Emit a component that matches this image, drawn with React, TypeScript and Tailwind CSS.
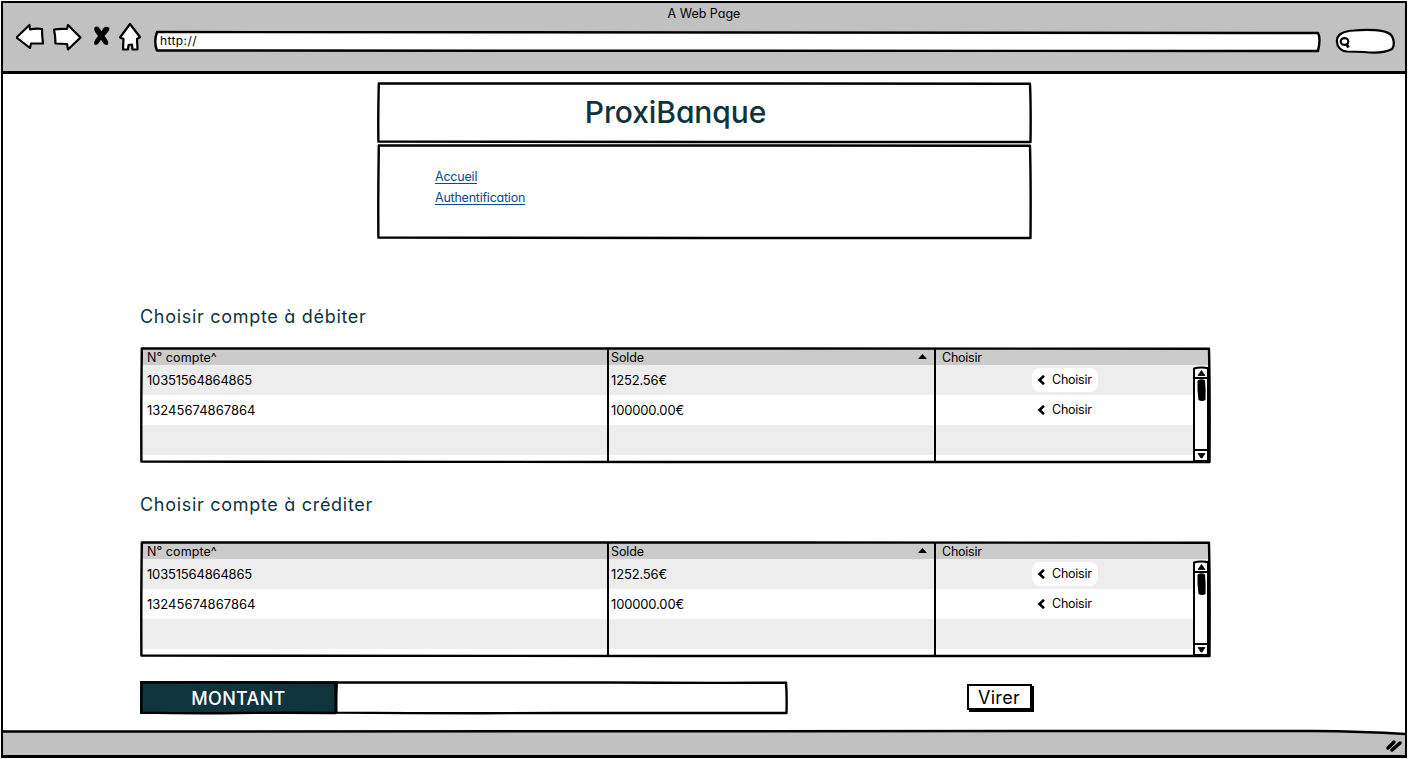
import type { ReactNode } from 'react';

const accounts = [
  { id: '10351564864865', idClass: 'tracking-[-0.18px]', balance: '1252.56€' },
  { id: '13245674867864', idClass: 'tracking-[0.02px]', balance: '100000.00€' },
];

function Sketch({ w, h }: { w: number; h: number }) {
  const r = w - 1.5;
  const b = h - 1;
  const d = `M1.8 1.5Q${w * 0.4} 0.9 ${w * 0.6} 1.5T${r - 0.5} 1.7Q${r + 0.5} ${h * 0.4} ${r} ${b}Q${w * 0.75} ${b - 0.5} ${w * 0.5} ${b}T1.4 ${b - 0.4}Q1 ${h * 0.6} 1.8 1.5Z`;
  return (
    <svg width={w} height={h + 1} viewBox={`0 0 ${w} ${h + 1}`} className="pointer-events-none absolute top-0 left-0" fill="none" stroke="black" strokeWidth="2.400" strokeLinejoin="round">
      <path d={d} />
    </svg>
  );
}

function Toolbar() {
  return (
    <header className="h-[71px] shrink-0 border-b-3 border-black bg-[#c1c1c1]">
      <div className="flex h-[23px] items-start justify-center pt-[3px] text-[12.5px] leading-4">A Web Page</div>
      <div className="-mt-[4px] flex h-[30px] pl-[13px]">
        <svg width="130" height="30" viewBox="16 22 130 30" fill="white" stroke="black" strokeWidth="2.200" strokeLinejoin="round" className="shrink-0">
          <path d="M16.500 37.500L29.500 25L30 29.500Q36 28 42 29Q42 36 43 43.500L31 43.500L30 48Z" />
          <path d="M54 29.500Q60 28.500 67 29L68 25L80.500 37.500L68 49.500L67 44L55.500 43.500Q55.500 36 54 29.500Z" />
          <path d="M94.500 27.500Q98 24 101.500 31.500Q104 25 109 27.500Q111 29 104.500 36Q109 41 108 44.500Q104 46.500 101 39.500Q98 45.500 95 45Q92 43 98 36Q93 30 94.500 27.500Z" fill="black" stroke="none" />
          <path d="M130 24L140 37L137 39L137.500 49.500L132.500 49.500L132 44.500L128.500 45L128 49.500L123 49.500L123.500 39L120 37.500Z" />
        </svg>
        <div className="relative mt-[8px] ml-[8px] flex h-[22px] w-[1167px] items-center pl-[6px] text-[12px] tracking-[0.4px]">
          <svg width="1167" height="23" viewBox="0 0 1167 23" className="absolute top-0 left-0" fill="white" stroke="black" strokeWidth="2.400" strokeLinejoin="round">
            <path d="M3 2Q500 1.200 1164 3Q1167 8 1164 21Q600 21.500 400 20.700L3 20.500Q-0.500 12 3 2Z" />
          </svg>
          <span className="relative">http://</span>
        </div>
        <svg width="62" height="26" viewBox="1334 28 62 26" className="mt-[6px] ml-[13px]" fill="white" stroke="black" strokeWidth="2.200">
          <path d="M1337 42C1336 34 1344 31 1354 30.500C1368 29 1384 30 1390 34C1394 37 1395 46 1392 49C1386 52.500 1374 53 1364 52L1347 51.500C1341 51 1337 47 1337 42Z" />
          <ellipse cx="1344.500" cy="41.500" rx="3.800" ry="3.300" />
          <path d="M1346.500 44L1348.500 47.500" strokeWidth="2.800" />
        </svg>
      </div>
    </header>
  );
}

function Choose({ raised }: { raised: boolean }) {
  return (
    <button className={`flex h-6 w-[66px] items-center rounded-lg pl-[4px] text-[12.5px] ${raised ? 'bg-white' : ''}`}>
      <svg width="9" height="10" viewBox="0 0 9 10" fill="none" stroke="black" strokeWidth="2.600" className="mr-[7px]"><path d="M8 0.800L3.500 5L8 9.200" /></svg>
      <span className="pt-[2px] tracking-[-0.25px]">Choisir</span>
    </button>
  );
}

function Scrollbar() {
  return (
    <svg width="17" height="95" viewBox="0 0 17 95" className="absolute top-[19px] right-px" fill="white" stroke="black" strokeWidth="2">
      <path d="M1 2.500Q8 0.500 16 2.500V95H1Z" />
      <path d="M1 12H16M1 84H16" />
      <path d="M5 9.500L8.500 4.500L12 9.500Z" fill="black" strokeWidth="0.800" />
      <path d="M4.500 14.500Q9 12 12 14.500Q13 24 12.500 34Q9 36 5.500 34Q4 24 4.500 14.500Z" fill="black" stroke="none" />
      <path d="M5 87.500H12L9 92H8Z" fill="black" strokeWidth="0.800" />
      <path d="M15.500 1V95" strokeWidth="3" />
    </svg>
  );
}

function Table() {
  const cols = 'grid grid-cols-[467px_327px_1fr]';
  return (
    <div className="relative h-[116px] w-[1071px] bg-white px-[2px] pt-[2px]">
      <div className={`${cols} h-4 bg-[#cbcbcb] text-[12.5px] leading-[18px]`}>
        <div className="pl-[5px] tracking-[0.08px]">N° compte^</div>
        <div className="flex h-4 items-center justify-between pr-[9px] pl-[2px]">
          <span className="pt-[2px] tracking-[-0.1px]">Solde</span>
          <svg width="9" height="5" viewBox="0 0 9 5" className="-mt-px"><path d="M0 5L4.500 0L9 5Z" /></svg>
        </div>
        <div className="pl-[6px] tracking-[-0.25px]">Choisir</div>
      </div>
      {accounts.map((a, i) => (
        <div key={a.id} className={`${cols} h-[30px] items-center text-[13px] ${i % 2 ? 'bg-white' : 'bg-[#ededed]'}`}>
          <div className={`pt-[2px] pl-[5px] ${a.idClass}`}>{a.id}</div>
          <div className="pt-[2px] pl-[2px] tracking-[-0.15px]">{a.balance}</div>
          <div className="-mt-px pl-[96px]"><Choose raised={i === 0} /></div>
        </div>
      ))}
      <div className="h-[30px] bg-[#ededed]" />
      <div className="absolute inset-y-px left-[467px] box-content w-[325px] border-x-2 border-black" />
      <Scrollbar />
      <Sketch w={1071} h={116} />
    </div>
  );
}

function Heading({ children }: { children: ReactNode }) {
  return <h2 className="h-7 pt-px text-[18px] leading-7 tracking-[0.7px] text-[#0e343c]">{children}</h2>;
}

export default function App() {
  return (
    <div className="h-[759px] w-[1408px] overflow-hidden bg-white p-px font-[Inter,sans-serif] text-black [font-feature-settings:'cv11']">
      <div className="flex h-[757px] flex-col border-2 border-b-3 border-black">
        <Toolbar />
        <main className="flex flex-1 flex-col pl-[137px]">
          <div className="relative mt-[8px] ml-[237px] flex h-[61px] w-[655px] items-center justify-center pr-[58px] text-[30px] font-[450] tracking-[-0.1px] text-[#0e343c]">
            ProxiBanque
            <Sketch w={655} h={61} />
          </div>
          <nav className="relative mt-[1px] ml-[237px] flex h-[95px] w-[655px] flex-col items-start pt-[25px] pl-[58px] text-[12.5px] text-[#0b4a8f]">
            <a className="mb-[6px] h-[15px] border-b border-current leading-[16px] tracking-[-0.2px]">Accueil</a>
            <a className="h-[15px] border-b border-current leading-[16px] tracking-[-0.23px]">Authentification</a>
            <Sketch w={655} h={95} />
          </nav>
          <div className="mt-[63px]"><Heading>Choisir compte à débiter</Heading></div>
          <div className="mt-[17px]"><Table /></div>
          <div className="mt-[27px]"><Heading>Choisir compte à créditer</Heading></div>
          <div className="mt-[23px]"><Table /></div>
          <div className="mt-[24px] flex">
            <div className="relative flex h-[33px] w-[197px] items-center justify-center bg-[#0e343c] pt-[2px] text-[18px] font-medium tracking-[0.3px] text-white">
              MONTANT
              <Sketch w={197} h={33} />
            </div>
            <div className="relative -ml-[2px] h-[33px] w-[453px]"><Sketch w={453} h={33} /></div>
            <button className="mt-[3px] ml-[179px] flex h-[26px] w-[65px] items-center justify-center border-2 border-black bg-white pr-px text-[18px] tracking-[0.3px] shadow-[2px_2px_0_black]">Virer</button>
          </div>
        </main>
        <footer className="flex h-[26px] shrink-0">
          <svg width="1402" height="26" viewBox="0 0 1402 26">
            <path d="M0 1.500H1310L1402 4V26H0Z" fill="#c1c1c1" />
            <path d="M0 2.500Q500 1.500 1310 2Q1360 2.500 1402 5" fill="none" stroke="black" strokeWidth="2.500" />
            <path d="M1385 19L1391 13M1389 21L1397 14" stroke="black" strokeWidth="3.500" strokeLinecap="round" />
          </svg>
        </footer>
      </div>
    </div>
  );
}
